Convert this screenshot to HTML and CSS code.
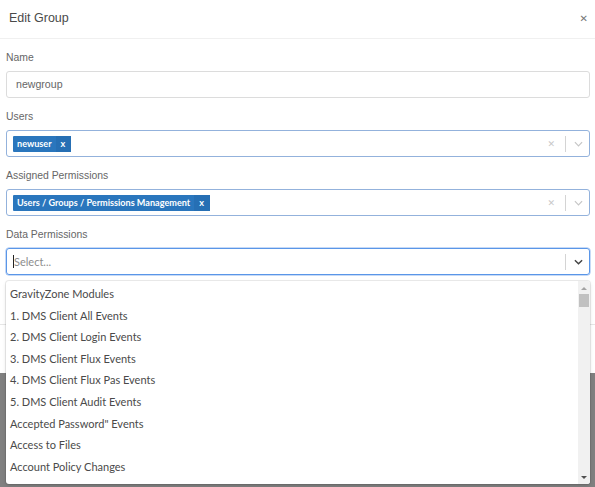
FILE: index.html
```html
<!DOCTYPE html>
<html>
<head>
<meta charset="utf-8">
<link rel="stylesheet" href="styles.css">
</head>
<body>
<div class="modal">
  <div class="header">
    <span class="title">Edit Group</span>
    <span class="close">&#x2715;</span>
  </div>
  <div class="body">
    <div class="group">
      <div class="label">Name</div>
      <div class="input">newgroup</div>
    </div>
    <div class="group">
      <div class="label">Users</div>
      <div class="select">
        <div class="values">
          <span class="chip"><span class="chip-text">newuser</span><span class="chip-x">x</span></span>
        </div>
        <div class="indicators">
          <span class="clear">&#x2715;</span>
          <span class="sep"></span>
          <svg class="chev" viewBox="0 0 10 6" width="9" height="6"><path d="M1 1 L5 5 L9 1" fill="none" stroke="currentColor" stroke-width="1.3"/></svg>
        </div>
      </div>
    </div>
    <div class="group">
      <div class="label">Assigned Permissions</div>
      <div class="select">
        <div class="values">
          <span class="chip"><span class="chip-text">Users / Groups / Permissions Management</span><span class="chip-x">x</span></span>
        </div>
        <div class="indicators">
          <span class="clear">&#x2715;</span>
          <span class="sep"></span>
          <svg class="chev" viewBox="0 0 10 6" width="9" height="6"><path d="M1 1 L5 5 L9 1" fill="none" stroke="currentColor" stroke-width="1.3"/></svg>
        </div>
      </div>
    </div>
    <div class="group">
      <div class="label">Data Permissions</div>
      <div class="select focused">
        <div class="values">
          <span class="caret"></span><span class="placeholder">Select...</span>
        </div>
        <div class="indicators">
          <span class="sep"></span>
          <svg class="chev dark" viewBox="0 0 10 6" width="9" height="6"><path d="M1 1 L5 5 L9 1" fill="none" stroke="currentColor" stroke-width="1.6"/></svg>
        </div>
      </div>
    </div>
  </div>
  <div class="footer"></div>
</div>
<div class="menu">
  <div class="list">
    <div class="item">GravityZone Modules</div>
    <div class="item">1. DMS Client All Events</div>
    <div class="item">2. DMS Client Login Events</div>
    <div class="item">3. DMS Client Flux Events</div>
    <div class="item">4. DMS Client Flux Pas Events</div>
    <div class="item">5. DMS Client Audit Events</div>
    <div class="item">Accepted Password" Events</div>
    <div class="item">Access to Files</div>
    <div class="item">Account Policy Changes</div>
  </div>
  <div class="scrollbar">
    <span class="arrow up"></span>
    <span class="thumb"></span>
    <span class="track"></span>
    <span class="arrow down"></span>
  </div>
</div>
</body>
</html>
```

FILE: styles.css
```css
html, body {
  margin: 0;
  padding: 0;
}
body {
  background: #808080;
  width: 595px;
  height: 487px;
  overflow: hidden;
  position: relative;
  font-family: "Liberation Sans", Arial, sans-serif;
}
.modal {
  background: #fff;
  height: 373px;
  display: flex;
  flex-direction: column;
}
.header {
  height: 38px;
  border-bottom: 1px solid #f0f0f0;
  display: flex;
  align-items: center;
  justify-content: space-between;
  padding: 0 7px 0 9px;
}
.title {
  font-size: 12.5px;
  color: #4a4a4a;
  position: relative;
  top: -1px;
}
.close {
  font-size: 10px;
  color: #777;
  font-family: "DejaVu Sans", sans-serif;
  position: relative;
  top: -1px;
}
.body {
  padding: 12px 5px 0 6px;
  flex: 1;
}
.group {
  margin-bottom: 12px;
}
.label {
  font-size: 10.4px;
  color: #666;
  height: 14px;
  line-height: 14px;
  margin-bottom: 6px;
}
.input {
  height: 25px;
  border: 1px solid #dcdcdc;
  border-radius: 3px;
  padding-left: 9px;
  font-size: 10.6px;
  color: #666;
  line-height: 25px;
}
.select {
  height: 25px;
  border: 1px solid #93b2dc;
  border-radius: 3px;
  display: flex;
  align-items: center;
  justify-content: space-between;
  font-family: "Lato", "Open Sans", sans-serif;
}
.select.focused {
  border: 1.5px solid #5a96e8;
  height: 25px;
  box-shadow: 0 0 0 0.5px #8fb5ee;
}
.values {
  display: flex;
  align-items: center;
  padding-left: 6px;
}
.chip {
  display: flex;
  height: 16px;
  background: #2a76bd;
  color: #fff;
  font-size: 9.1px;
  font-weight: bold;
  line-height: 16px;
  border-radius: 1px;
}
.chip-text {
  padding: 0 4px 0 4px;
}
.chip-x {
  padding: 0 6px 0 5px;
  background: #266fb4;
}
.caret {
  display: inline-block;
  width: 1px;
  height: 13px;
  background: #222;
}
.placeholder {
  color: #8c8c8c;
  font-size: 11px;
}
.indicators {
  display: flex;
  align-items: center;
  height: 100%;
  padding-right: 5px;
}
.clear {
  color: #c8c8c8;
  font-size: 9px;
  font-family: "DejaVu Sans", sans-serif;
  margin-right: 10px;
}
.sep {
  width: 1px;
  height: 16px;
  background: #d4d4d4;
  margin-right: 8px;
}
.chev {
  color: #c6c6c6;
  margin-right: 1px;
}
.chev.dark {
  color: #444;
}
.footer {
  height: 48px;
  border-top: 1px solid #e6e6e6;
}
.menu {
  position: absolute;
  left: 6px;
  top: 281px;
  width: 584px;
  height: 203px;
  background: #fff;
  border-radius: 3px;
  box-shadow: 0 0 0 1px rgba(0,0,0,0.08), 0 2px 4px rgba(0,0,0,0.12);
  display: flex;
  overflow: hidden;
}
.list {
  flex: 1;
  padding-top: 2px;
  font-family: "Lato", "Open Sans", sans-serif;
  font-size: 11px;
  color: #4a4a4a;
}
.item {
  height: 21.6px;
  line-height: 21.6px;
  padding-left: 4px;
}
.scrollbar {
  width: 12px;
  background: #f1f1f1;
  display: flex;
  flex-direction: column;
  align-items: center;
}
.arrow {
  width: 0;
  height: 0;
  border-left: 3.5px solid transparent;
  border-right: 3.5px solid transparent;
  margin: 5px 0 4px;
}
.arrow.up {
  border-bottom: 3.5px solid #a3a3a3;
  margin-top: 6px;
}
.arrow.down {
  border-top: 3.5px solid #505050;
  margin-bottom: 5px;
}
.thumb {
  width: 10px;
  height: 13px;
  background: #c1c1c1;
}
.track {
  flex: 1;
}
```
